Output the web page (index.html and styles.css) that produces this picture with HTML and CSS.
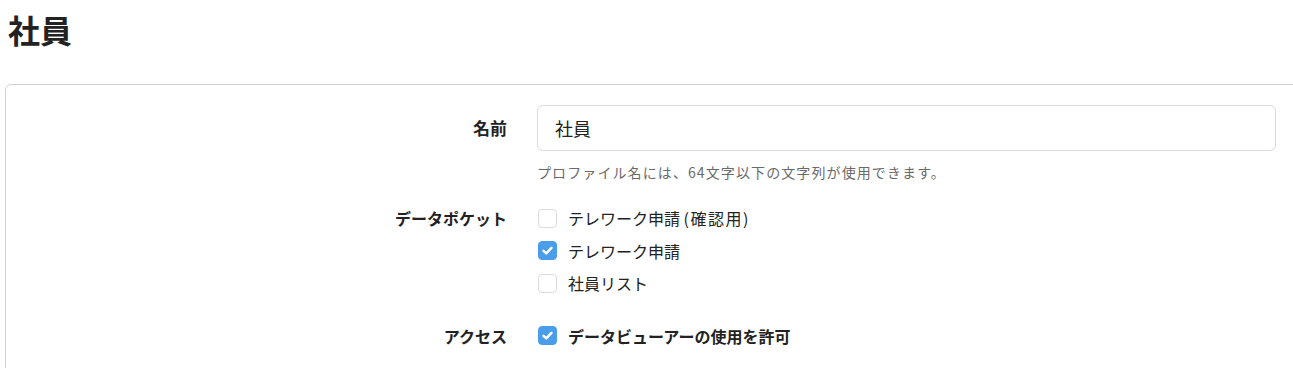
FILE: index.html
```html
<!DOCTYPE html>
<html lang="ja">
<head>
<meta charset="utf-8">
<title>社員</title>
<link rel="stylesheet" href="styles.css">
</head>
<body>
<h1 class="page-title">社員</h1>
<div class="card">
  <div class="form-row">
    <div class="form-label label-input">名前</div>
    <div class="form-field">
      <div class="text-input">社員</div>
      <div class="help">プロファイル名には、64文字以下の文字列が使用できます。</div>
    </div>
  </div>
  <div class="form-row row-gap">
    <div class="form-label label-check">データポケット</div>
    <div class="form-field">
      <div class="check-item"><span class="box"></span><span>テレワーク申請 <span class="paren">(確認用)</span></span></div>
      <div class="check-item"><span class="box checked"><svg viewBox="0 0 20 20"><path d="M5.8 10.4 L8.7 13.1 L14.2 7.3"/></svg></span><span>テレワーク申請</span></div>
      <div class="check-item"><span class="box"></span><span>社員リスト</span></div>
    </div>
  </div>
  <div class="form-row row-gap">
    <div class="form-label label-check">アクセス</div>
    <div class="form-field">
      <div class="check-item strong"><span class="box checked"><svg viewBox="0 0 20 20"><path d="M5.8 10.4 L8.7 13.1 L14.2 7.3"/></svg></span><span>データビューアーの使用を許可</span></div>
    </div>
  </div>
</div>
</body>
</html>
```
FILE: styles.css
```css
html, body {
  margin: 0;
  padding: 0;
  overflow: hidden;
  background: #fff;
}
body {
  font-family: "Noto Sans CJK JP", "Noto Sans", sans-serif;
  color: #222;
  font-size: 16px;
}
.page-title {
  margin: 0;
  padding: 9px 0 0 8px;
  font-size: 32px;
  line-height: 40px;
  font-weight: 700;
  color: #222;
}
.card {
  margin: 35px 0 0 5px;
  width: 1320px;
  border: 1px solid #d2d2d2;
  border-radius: 6px;
  padding: 20px 0 40px;
}
.form-row {
  display: grid;
  grid-template-columns: 531px 739px;
}
.row-gap {
  margin-top: 20px;
}
.form-label {
  text-align: right;
  padding-right: 30px;
  font-weight: 700;
  font-size: 16px;
}
.label-input {
  line-height: 46px;
  font-size: 17px;
}
.label-check {
  line-height: 32.5px;
}
.text-input {
  box-sizing: border-box;
  height: 46px;
  border: 1px solid #dcdcdc;
  border-radius: 6px;
  padding: 0 17px;
  font-size: 18px;
  line-height: 44px;
  color: #222;
}
.help {
  margin-top: 11px;
  font-size: 14px;
  line-height: 20px;
  color: #6a6a6a;
  letter-spacing: 1.1px;
}
.check-item {
  display: flex;
  align-items: center;
  height: 32.5px;
  font-size: 16px;
  padding-left: 1px;
}
.paren {
  letter-spacing: 1.5px;
}
.check-item.strong {
  font-weight: 700;
}
.box {
  box-sizing: border-box;
  width: 19px;
  height: 19px;
  border: 1px solid #dadada;
  border-radius: 4px;
  margin-right: 11px;
  display: flex;
  align-items: center;
  justify-content: center;
  background: #fff;
}
.box.checked {
  background: #4a9de8;
  border-color: #4a9de8;
}
.box svg {
  width: 19px;
  height: 19px;
  flex: none;
}
.box svg path {
  fill: none;
  stroke: #fff;
  stroke-width: 2.6;
  stroke-linecap: round;
  stroke-linejoin: round;
}
```
